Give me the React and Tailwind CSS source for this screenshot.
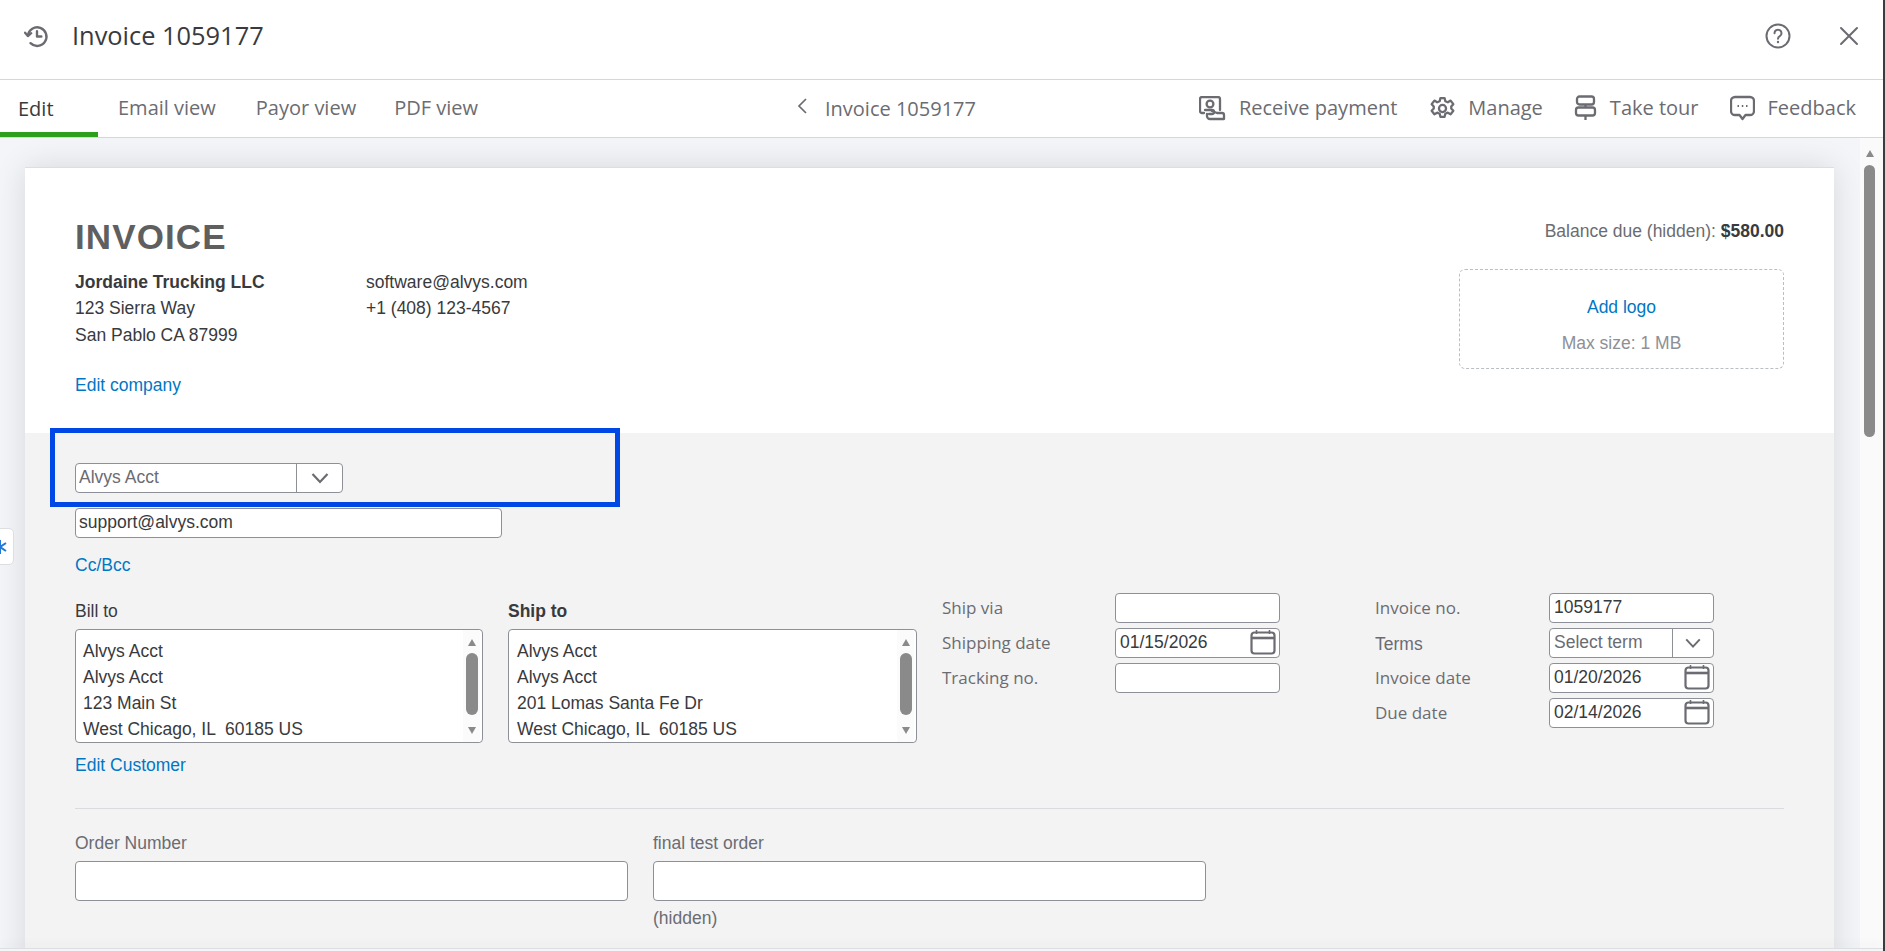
import React from "react";

const sans = "font-['Liberation_Sans',Arial,sans-serif]";
const ui = "font-['Open_Sans','Lato',sans-serif]";

function Tab({ children, active, className = "" }) {
  return (
    <div className={`h-full flex items-center relative text-[20px] font-medium ${active ? "text-[#393a3d] pl-[18px] w-[98px] border-b-[5px] border-[#2ca01c] pt-[5px]" : "text-[#6b6c72] pb-[1px]"} ${className}`}>
      {children}
    </div>
  );
}

function Cal() {
  return (
    <svg width="26" height="26" viewBox="0 0 26 26" fill="none" stroke="#6b6c72" strokeWidth="2.2">
      <rect x="1.5" y="3.5" width="23" height="21" rx="3" />
      <path d="M1.5 9h23" strokeWidth="2.6" />
      <path d="M6.5 1v4M19.5 1v4" strokeWidth="1.6" />
    </svg>
  );
}

function Chevron({ size = 20 }) {
  return (
    <svg width={size} height={size} viewBox="0 0 20 20" fill="none" stroke="#6b6c72" strokeWidth="2.2">
      <path d="M2.5 6l7.5 8 7.5-8" />
    </svg>
  );
}

function Field({ children, className = "" }) {
  return <div className={`h-[30px] w-[165px] bg-white border border-[#8d9096] rounded-[4px] flex items-center justify-between pl-[4px] pb-[2px] text-[17.5px] text-[#393a3d] ${sans} ${className}`}>{children}</div>;
}

function AddressBox({ lines, width, pad }) {
  return (
    <div className={`${width} h-[114px] bg-white border border-[#8d9096] rounded-[4px] flex overflow-hidden text-[#393a3d] text-[17.5px] ${sans}`}>
      <div className={`flex-1 ${pad} pt-[8px] leading-[26px]`}>
        {lines.map((l, i) => <div key={i} className="whitespace-pre">{l}</div>)}
      </div>
      <div className="w-[17px] flex flex-col items-center pt-[9px] mr-[2px] bg-[#fbfbfb]">
        <div className="w-0 h-0 border-x-[4px] border-x-transparent border-b-[7px] border-b-[#8a8a8a]" />
        <div className="w-[12px] h-[62px] rounded-full bg-[#8a8a8a] mt-[7px]" />
        <div className="w-0 h-0 border-x-[4px] border-x-transparent border-t-[7px] border-t-[#8a8a8a] mt-[12px]" />
      </div>
    </div>
  );
}

function Action({ icon, children, className = "" }) {
  return (
    <div className={`flex items-center gap-[13px] text-[20px] font-medium text-[#6b6c72] pb-[1px] ${className}`}>
      {icon}
      <span>{children}</span>
    </div>
  );
}

export default function App() {
  return (
    <div className={`h-[951px] w-full overflow-hidden flex bg-[#3a3d40] ${ui}`}>
      <div className="flex-1 min-w-0 mr-[2px] flex flex-col bg-white relative">
        {/* title bar */}
        <div className="h-[80px] shrink-0 border-b border-[#d4d7dc] flex items-center pl-[24px] pr-[24px] pb-[8px]">
          <svg width="26" height="26" viewBox="0 0 24 24" fill="none" stroke="#6b6c72" strokeWidth="2.2" strokeLinecap="round" strokeLinejoin="round">
            <path d="M3.6 11.5A8.6 8.6 0 1 1 6 18.6" />
            <path d="M1 9l2.6 3 3-2.6" />
            <path d="M12 7.5V12.5h4" />
          </svg>
          <span className="ml-[22px] text-[25.4px] text-[#393a3d]">Invoice 1059177</span>
          <div className="ml-auto flex items-center gap-[48px]">
            <svg width="26" height="26" viewBox="0 0 26 26" fill="none" stroke="#6b6c72" strokeWidth="2">
              <circle cx="13" cy="13" r="11.5" />
              <path d="M9.5 10.2a3.5 3.5 0 1 1 5.3 3c-1.3.8-1.8 1.4-1.8 2.6" strokeLinecap="round" />
              <circle cx="13" cy="19" r="1.2" fill="#6b6c72" stroke="none" />
            </svg>
            <svg width="20" height="20" viewBox="0 0 20 20" fill="none" stroke="#6b6c72" strokeWidth="2" strokeLinecap="round">
              <path d="M2 2l16 16M18 2L2 18" />
            </svg>
          </div>
        </div>

        {/* tabs + toolbar */}
        <div className="h-[58px] shrink-0 border-b border-[#d4d7dc] flex items-stretch pr-[27px]">
          <Tab active>Edit</Tab>
          <div className="flex gap-[40px] ml-[20px]">
            <Tab>Email view</Tab>
            <Tab>Payor view</Tab>
            <Tab className="-ml-[2px]">PDF view</Tab>
          </div>
          <div className="flex items-center ml-[318px] text-[20px] font-medium text-[#6b6c72]">
            <svg width="12" height="18" viewBox="0 0 12 18" fill="none" stroke="#6b6c72" strokeWidth="1.7" className="mb-[6px]">
              <path d="M10 2L3 9l7 7" />
            </svg>
            <span className="ml-[17px]">Invoice 1059177</span>
          </div>
          <div className="ml-auto flex items-center gap-[31px]">
            <Action className="mr-[2px] gap-[11px]" icon={
              <svg width="27" height="25" viewBox="0 0 27 25" fill="none" stroke="#6b6c72" strokeWidth="2.3" strokeLinejoin="round" strokeLinecap="round">
                <path d="M5 17H3a2 2 0 0 1-2-2V3a2 2 0 0 1 2-2h16a2 2 0 0 1 2 2v11" />
                <circle cx="11" cy="8" r="3.4" />
                <path d="M6 14h7a2 2 0 0 1 0 4h-3" />
                <path d="M13 15l5 2h5a2 2 0 0 1 2 2v4H11a3 3 0 0 1-3-3v-2" />
              </svg>
            }>Receive payment</Action>
            <Action icon={
              <svg width="25" height="25" viewBox="0 0 24 24" fill="none" stroke="#6b6c72" strokeWidth="2.2" strokeLinejoin="round">
                <path d="M10 2h4l.7 3 2.4 1 2.7-1.6 2.6 3.4-2 2.2v2l2 2.2-2.6 3.4-2.7-1.6-2.4 1-.7 3h-4l-.7-3-2.4-1-2.7 1.6-2.6-3.4 2-2.2v-2l-2-2.2 2.6-3.4L6.9 6l2.4-1z" />
                <circle cx="12" cy="12" r="3.4" />
              </svg>
            }>Manage</Action>
            <Action icon={
              <svg width="23" height="26" viewBox="0 0 23 26" fill="none" stroke="#6b6c72" strokeWidth="2.3" strokeLinejoin="round">
                <rect x="3" y="1.5" width="17" height="8" rx="2.5" />
                <rect x="2" y="12.5" width="19" height="8" rx="2.5" />
                <path d="M11.5 9.5v3M11.5 20.5V25" />
              </svg>
            }>Take tour</Action>
            <Action icon={
              <svg width="25" height="26" viewBox="0 0 25 26" fill="none" stroke="#6b6c72" strokeWidth="2.3" strokeLinejoin="round">
                <path d="M5 2h15a4 4 0 0 1 4 4v10a4 4 0 0 1-4 4h-4.5l-3 4-3-4H5a4 4 0 0 1-4-4V6a4 4 0 0 1 4-4z" />
                <path d="M7.5 11h1.5M11.8 11h1.5M16 11h1.5" strokeWidth="2" />
              </svg>
            }>Feedback</Action>
          </div>
        </div>

        {/* body */}
        <div className="flex-1 flex min-h-0 bg-[#f4f5f8] relative">
          <div className="flex-1 min-w-0 overflow-hidden pl-[25px] pr-[26px] pt-[29px]">
            <div className={`bg-white border-t border-[#dcdee2] shadow-[0_0_30px_rgba(0,0,0,0.12)] ${sans}`}>
              {/* company */}
              <div className="h-[265px] px-[50px] flex justify-between">
                <div>
                  <div className="text-[35px] font-bold text-[#5f5f5f] tracking-[1.1px] mt-[49px] leading-[40px]">INVOICE</div>
                  <div className="flex mt-[12px] text-[17.5px] leading-[26.4px] text-[#393a3d]">
                    <div className="w-[291px]">
                      <div className="font-bold">Jordaine Trucking LLC</div>
                      <div>123 Sierra Way</div>
                      <div>San Pablo CA 87999</div>
                    </div>
                    <div>
                      <div>software@alvys.com</div>
                      <div>+1 (408) 123-4567</div>
                    </div>
                  </div>
                  <div className="mt-[24px] text-[17.5px] text-[#0077c5] leading-[26px]">Edit company</div>
                </div>
                <div className="flex flex-col items-end pt-[50px]">
                  <div className="text-[17.5px] text-[#6b6c72] leading-[26px]">Balance due (hidden): <span className="font-bold text-[#393a3d]">$580.00</span></div>
                  <div className="mt-[25px] w-[325px] h-[100px] border border-dashed border-[#babec5] rounded-[6px] flex flex-col items-center pt-[25px] text-[17.5px] leading-[24px]">
                    <div className="text-[#0077c5]">Add logo</div>
                    <div className="text-[#8d9096] mt-[12px]">Max size: 1 MB</div>
                  </div>
                </div>
              </div>

              {/* form */}
              <div className="bg-[#f3f3f4] px-[50px] pt-[30px] pb-[40px] relative">
                <div className="absolute left-[25px] top-[-5px] w-[570px] h-[79px] border-[5px] border-[#0048e6]" />
                <div className="w-[268px] h-[30px] bg-white border border-[#8d9096] rounded-[4px] flex items-stretch text-[17.5px] text-[#6b6c72]">
                  <div className="flex-1 pl-[3px] pb-[2px] flex items-center">Alvys Acct</div>
                  <div className="w-[46px] border-l border-[#8d9096] flex items-center justify-center"><Chevron /></div>
                </div>
                <div className="mt-[15px] w-[427px] h-[30px] bg-white border border-[#8d9096] rounded-[4px] flex items-center pl-[3px] pb-[2px] text-[17.5px] text-[#393a3d]">support@alvys.com</div>
                <div className="mt-[14px] text-[17.5px] text-[#0077c5] leading-[26px]">Cc/Bcc</div>

                <div className="flex mt-[20px]">
                  <div className="w-[433px]">
                    <div className="text-[17.5px] text-[#393a3d] leading-[26px] mb-[5px]">Bill to</div>
                    <AddressBox width="w-[408px]" pad="pl-[7px]" lines={["Alvys Acct", "Alvys Acct", "123 Main St", "West Chicago, IL  60185 US"]} />
                    <div className="mt-[9px] text-[17.5px] text-[#0077c5] leading-[26px]">Edit Customer</div>
                  </div>
                  <div className="w-[434px]">
                    <div className="text-[17.5px] font-bold text-[#393a3d] leading-[26px] mb-[5px]">Ship to</div>
                    <AddressBox width="w-[409px]" pad="pl-[8px]" lines={["Alvys Acct", "Alvys Acct", "201 Lomas Santa Fe Dr", "West Chicago, IL  60185 US"]} />
                  </div>
                  <div className={`w-[433px] -mt-[5px] flex flex-col gap-[5px] text-[17px] text-[#6b6c72] ${ui}`}>
                    <div className="flex items-center"><div className="w-[173px]">Ship via</div><Field /></div>
                    <div className="flex items-center"><div className="w-[173px]">Shipping date</div><Field className="pr-[3px]"><span>01/15/2026</span><Cal /></Field></div>
                    <div className="flex items-center"><div className="w-[173px]">Tracking no.</div><Field /></div>
                  </div>
                  <div className={`-mt-[5px] flex flex-col gap-[5px] text-[17px] text-[#6b6c72] ${ui}`}>
                    <div className="flex items-center"><div className="w-[174px]">Invoice no.</div><Field>1059177</Field></div>
                    <div className="flex items-center">
                      <div className={`w-[174px] pt-[3px] text-[17.5px] ${sans}`}>Terms</div>
                      <div className={`h-[30px] w-[165px] bg-white border border-[#8d9096] rounded-[4px] flex items-stretch text-[17.5px] text-[#6b6c72] ${sans}`}>
                        <div className="flex-1 pl-[4px] pb-[2px] flex items-center">Select term</div>
                        <div className="w-[41px] border-l border-[#8d9096] flex items-center justify-center"><Chevron size={18} /></div>
                      </div>
                    </div>
                    <div className="flex items-center"><div className="w-[174px]">Invoice date</div><Field className="pr-[3px]"><span>01/20/2026</span><Cal /></Field></div>
                    <div className="flex items-center"><div className="w-[174px]">Due date</div><Field className="pr-[3px]"><span>02/14/2026</span><Cal /></Field></div>
                  </div>
                </div>

                <div className="mt-[30px] border-t border-[#d9dbe0]" />

                <div className="flex gap-[25px] mt-[21px]">
                  <div className="w-[553px]">
                    <div className="text-[17.5px] text-[#6b6c72] leading-[26px] mb-[5px]">Order Number</div>
                    <div className="h-[40px] bg-white border border-[#8d9096] rounded-[4px]" />
                  </div>
                  <div className="w-[553px]">
                    <div className="text-[17.5px] text-[#6b6c72] leading-[26px] mb-[5px]">final test order</div>
                    <div className="h-[40px] bg-white border border-[#8d9096] rounded-[4px]" />
                    <div className="text-[17.5px] text-[#6b6c72] leading-[26px] mt-[4px]">(hidden)</div>
                  </div>
                </div>
              </div>
            </div>
          </div>

          {/* page scrollbar */}
          <div className="w-[23px] shrink-0 bg-[#fafafa] flex flex-col items-center pt-[12px] pr-[4px]">
            <div className="w-0 h-0 border-x-[4px] border-x-transparent border-b-[7px] border-b-[#8a8a8a]" />
            <div className="w-[11px] h-[272px] rounded-full bg-[#8a8a8a] mt-[8px]" />
          </div>

          {/* left edge tab */}
          <div className="absolute left-[-6px] top-[390px] w-[20px] h-[37px] bg-white border border-[#dcdee2] rounded-[5px] flex items-center justify-center overflow-hidden">
            <svg width="16" height="16" viewBox="0 0 16 16" fill="none" stroke="#2379d8" strokeWidth="2" className="ml-[-9px]">
              <path d="M8 1v14M2 4l12 8M14 4L2 12" />
            </svg>
          </div>

          {/* bottom edge */}
          <div className="absolute left-0 right-0 bottom-0 h-[3px] bg-[#f4f5f8] border-t border-[#dcdee2] shadow-[0_-4px_8px_rgba(0,0,0,0.05)]" />
        </div>
      </div>
    </div>
  );
}
